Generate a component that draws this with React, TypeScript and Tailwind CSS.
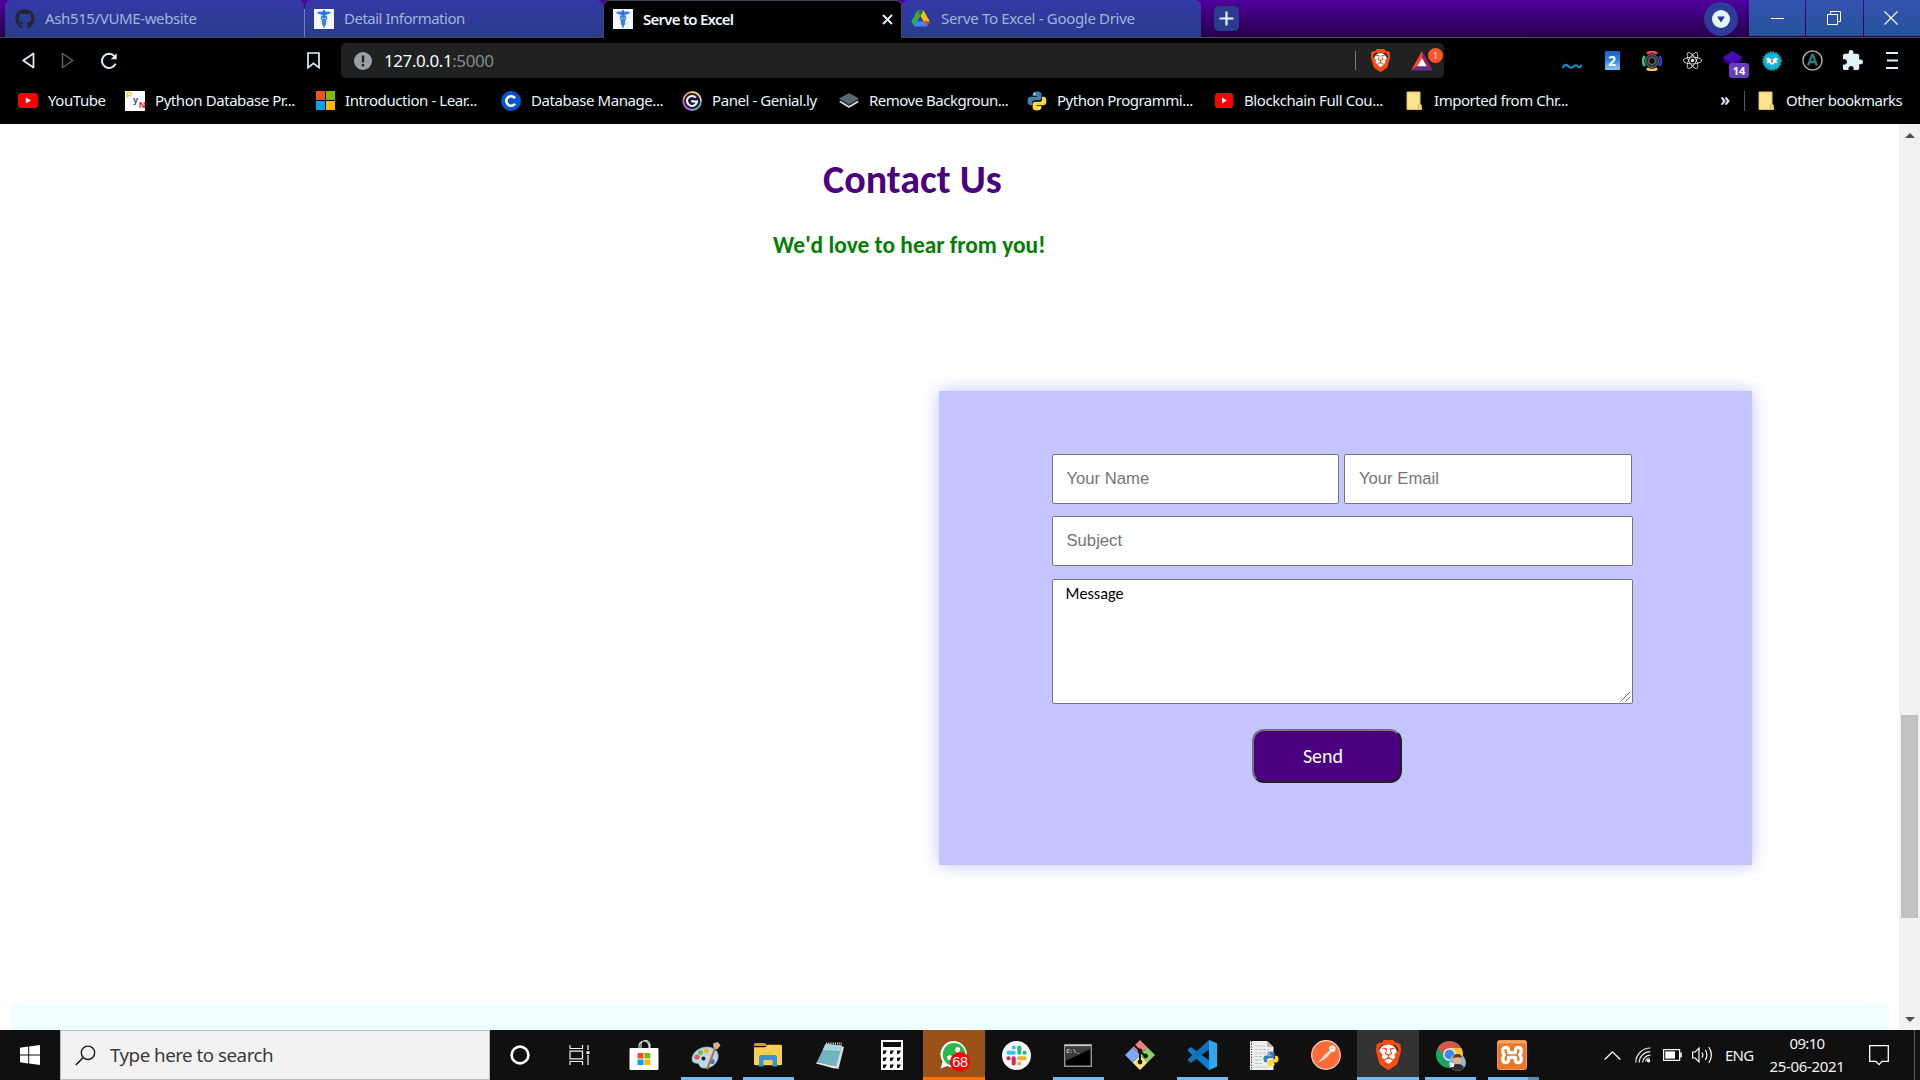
import React, { type ReactNode } from 'react';
import { FaGithub, FaReact, FaPhoneAlt } from 'react-icons/fa';
import { FaBrave } from 'react-icons/fa6';
import { MdExtension } from 'react-icons/md';

/* ---------- shared icons ---------- */

function Caduceus() {
  return (
    <svg className="h-5 w-5 shrink-0" viewBox="0 0 20 20">
      <rect width="20" height="20" fill="#f4f5f8" />
      <path d="M3 3.2Q6.5 1.6 10 3.2Q13.5 1.6 17 3.2Q15.6 5.4 13 5.4L11.5 6.4H8.5L7 5.4Q4.4 5.4 3 3.2Z" fill="#2f7fe8" />
      <circle cx="10" cy="2.2" r="1.3" fill="#2f6fe0" />
      <path d="M10 3V18.8" stroke="#1d62d8" strokeWidth="1.2" />
      <path d="M7 7.2Q13.6 8.2 12.6 9.8Q11.6 11.2 8.2 12Q7.6 13.4 11.6 14.4Q11.6 15.8 9.4 16.6M13 7.2Q6.4 8.2 7.4 9.8Q8.4 11.2 11.8 12Q12.4 13.4 8.4 14.4Q8.4 15.8 10.6 16.6" stroke="#2f7fe8" strokeWidth="1.3" fill="none" />
    </svg>
  );
}

function DriveLogo() {
  return (
    <svg className="h-[17px] w-[19px] shrink-0" viewBox="0 0 19 17">
      <path d="M6.3 0.5L9.5 6L3.2 16.5L0.3 11.2Z" fill="#34a853" />
      <path d="M6.3 0.5H12.7L18.7 11.2H12.5Z" fill="#fbbc04" />
      <path d="M6.3 0.5H12.7L9.5 6Z" fill="#188038" />
      <path d="M3.2 16.5L6.3 11.2H18.7L15.8 16.5Z" fill="#4285f4" />
      <path d="M12.5 11.2H18.7L15.8 16.5Z" fill="#ea4335" />
    </svg>
  );
}

function YouTube({ small }: { small?: boolean }) {
  return (
    <svg className={small ? 'h-[15px] w-[18px]' : 'h-[15px] w-5'} viewBox="0 0 20 15" preserveAspectRatio="none">
      <rect width="20" height="15" rx="3.6" fill="#f00" />
      <path d="M7.8 4.4L13 7.5L7.8 10.6Z" fill="#fff" />
    </svg>
  );
}

function Folder() {
  return (
    <svg className="h-5 w-[17px]" viewBox="0 0 17 20">
      <path d="M1 1H14V13L15.5 14.5V18.5H1Z" fill="#ffe591" stroke="#e8c65a" strokeWidth="1" />
      <path d="M12 18.5V14.5L14 12.8L15.5 14.5V18.5Z" fill="#f4cf62" stroke="#d9b13f" strokeWidth=".6" />
    </svg>
  );
}

function PythonLogo({ className }: { className: string }) {
  return (
    <svg className={className} viewBox="0 0 20 20">
      <path d="M10 .6C6.6.6 5.6 1.7 5.6 3.2V5H10.2V5.7H3.4C1.6 5.7.6 7.4.6 10S1.8 14.2 3.2 14.2H5V11.8C5 10.2 6.2 9.2 7.8 9.2H12.2C13.6 9.2 14.4 8.2 14.4 7V3.2C14.4 1.5 12.8.6 10 .6Z" fill="#3f7fb5" />
      <path d="M10 19.4C13.4 19.4 14.4 18.3 14.4 16.8V15H9.8V14.3H16.6C18.4 14.3 19.4 12.6 19.4 10S18.2 5.8 16.8 5.8H15V8.2C15 9.8 13.8 10.8 12.2 10.8H7.8C6.4 10.8 5.6 11.8 5.6 13V16.8C5.6 18.5 7.2 19.4 10 19.4Z" fill="#ffd43b" />
      <circle cx="7.6" cy="3.1" r=".9" fill="#fff" />
      <circle cx="12.4" cy="16.9" r=".9" fill="#fff" />
    </svg>
  );
}

function Brave({ className, iconClass }: { className: string; iconClass: string }) {
  return (
    <span className={`grid shrink-0 place-items-center ${className}`}>
      <span className="col-start-1 row-start-1 h-[68%] w-[64%] rounded-full bg-white" />
      <FaBrave className={`z-10 col-start-1 row-start-1 text-[#fb4a12] ${iconClass}`} />
    </span>
  );
}

/* ---------- browser chrome ---------- */

function Tab({ icon, title, className, children }: { icon: ReactNode; title: string; className: string; children?: ReactNode }) {
  return (
    <div className={`flex h-[37px] shrink-0 items-center rounded-t-[6px] ${className}`}>
      <span className="flex w-[30px] shrink-0 items-center">{icon}</span>
      <span className="whitespace-nowrap">{title}</span>
      {children}
    </div>
  );
}

function TabStrip() {
  return (
    <div className="flex h-[38px] items-start border-b border-[#4b4658] bg-linear-to-b from-[#50009e] to-[#26004c] pl-[5px] text-[15px] tracking-[-0.37px] text-[#a3b3dc]">
      <Tab
        className="w-[299px] bg-linear-to-b from-[#3538a8] to-[#283c8a] pl-[10px]"
        icon={<FaGithub className="h-5 w-5 text-[#24262c]" />}
        title="Ash515/VUME-website"
      />
      <span className="mt-[9px] h-[28px] w-px bg-[#6f7fc0]" />
      <Tab
        className="w-[298px] bg-linear-to-b from-[#3538a8] to-[#283c8a] pl-[9px] tracking-[-0.5px]"
        icon={<Caduceus />}
        title="Detail Information"
      />
      <Tab
        className="h-[38px] w-[299px] border border-b-0 border-[#4b4658] bg-black pb-px pl-[9px] font-semibold tracking-[-0.75px] text-[#eef8ff]"
        icon={<Caduceus />}
        title="Serve to Excel"
      >
        <svg className="mr-[8px] ml-auto h-[11px] w-[11px]" viewBox="0 0 11 11">
          <path d="M1 1L10 10M10 1L1 10" stroke="#e8f6fb" strokeWidth="1.8" />
        </svg>
      </Tab>
      <Tab
        className="w-[299px] bg-linear-to-b from-[#3538a8] to-[#283c8a] pl-[9px] tracking-[-0.32px]"
        icon={<DriveLogo />}
        title="Serve To Excel - Google Drive"
      />
      <div className="mt-[6px] ml-[13px] grid h-[25px] w-[25px] place-items-center rounded-[5px] bg-[#2c3a90]">
        <svg className="h-[15px] w-[15px]" viewBox="0 0 15 15">
          <path d="M7.5 .5V14.5M.5 7.5H14.5" stroke="#dff4fb" strokeWidth="2.2" />
        </svg>
      </div>
      <div className="mt-[2px] ml-auto grid h-[34px] w-[34px] place-items-center rounded-full bg-[#2f3b9b]">
        <svg className="h-[18px] w-[18px]" viewBox="0 0 18 18">
          <circle cx="9" cy="9" r="9" fill="#e2f5fc" />
          <path d="M5.2 6.6H12.8L9 12.4Z" fill="#2c3285" />
        </svg>
      </div>
      <div className="ml-[11px] flex h-9 w-[171px] gap-px">
        <span className="grid w-14 place-items-center bg-linear-to-b from-[#3353b2] to-[#265399]">
          <span className="h-px w-[13px] bg-white" />
        </span>
        <span className="grid w-[57px] place-items-center bg-linear-to-b from-[#3353b2] to-[#265399] pr-[2px]">
          <svg className="h-[14px] w-[14px]" viewBox="0 0 14 14" fill="none" stroke="#fff">
            <path d="M.5 3.5H10.5V13.5H.5ZM3.5 3.5V.5H13.5V10.5H10.5" />
          </svg>
        </span>
        <span className="grid flex-1 place-items-center bg-linear-to-b from-[#3353b2] to-[#265399] pr-[2px]">
          <svg className="h-[14px] w-[14px]" viewBox="0 0 14 14">
            <path d="M.5 .5L13.5 13.5M13.5 .5L.5 13.5" stroke="#fff" strokeWidth="1.1" />
          </svg>
        </span>
      </div>
    </div>
  );
}

function Extensions() {
  return (
    <div className="ml-[108px] flex h-full items-center">
      <span className="flex w-10 justify-center">
        <svg className="mt-[12px] h-[7px] w-[20px]" viewBox="0 0 20 7">
          <path d="M.5 5Q3 0 6 3T11.5 3.5T16 3.5T19.5 1.5" fill="none" stroke="#0a93d6" strokeWidth="2" />
        </svg>
      </span>
      <span className="flex w-10 justify-center">
        <span className="grid h-[19px] w-[15px] place-items-center rounded-[1px] bg-linear-to-b from-[#1763c4] via-[#2f86e4] to-[#8ac6fa] font-['Noto_Sans'] text-[14px] leading-none font-bold text-white">2</span>
      </span>
      <span className="flex w-10 justify-center">
        <svg className="h-5 w-5" viewBox="0 0 20 20" fill="none">
          <circle cx="10" cy="10" r="6.6" fill="#3a3a3c" stroke="#666" strokeWidth="1" />
          <circle cx="10" cy="10" r="3.4" fill="#0d0d10" stroke="#777" strokeWidth="1" />
          <path d="M4.9 2.7A8.9 8.9 0 0 1 15.1 2.7" stroke="#f0484e" strokeWidth="2.8" />
          <path d="M17.3 5A8.9 8.9 0 0 1 17.3 15" stroke="#2244dd" strokeWidth="2.6" />
          <path d="M15.1 17.3A8.9 8.9 0 0 1 4.9 17.3" stroke="#f8c860" strokeWidth="2.8" />
          <path d="M2.7 15A8.9 8.9 0 0 1 2.7 5" stroke="#44c070" strokeWidth="2.6" />
        </svg>
      </span>
      <span className="flex w-10 justify-center">
        <FaReact className="h-[19px] w-[19px] text-[#e4e4e4]" />
      </span>
      <span className="relative flex w-10 justify-center">
        <svg className="h-5 w-[21px]" viewBox="0 0 21 20">
          <path d="M10.5 1L20.5 9.5L10.5 17L.5 9.5Z" fill="#2c0570" />
          <path d="M10.5 0L20.5 6.5L10.5 13.5L.5 6.5Z" fill="#470ab4" />
        </svg>
        <span className="absolute top-[12px] left-[17px] grid h-[15px] w-5 place-items-center rounded-[3px] bg-[#6a3bbd] font-['Noto_Sans'] text-[11px] leading-none font-bold text-white">14</span>
      </span>
      <span className="flex w-10 justify-center">
        <svg className="h-5 w-5" viewBox="0 0 20 20">
          <circle cx="10" cy="10" r="8.8" fill="#0bb6c6" stroke="#0aa7b8" strokeWidth="2" strokeDasharray="1.6 1.2" />
          <circle cx="10" cy="10" r="7" fill="#18b4dd" />
          <path d="M4 7.6L6.5 6.4L8.6 8.6L10 7.6L11.4 8.6L13.5 6.4L16 7.6L14.5 10.2L15 12.4L12.6 11.6L11.5 13.4H8.5L7.4 11.6L5 12.4L5.5 10.2Z" fill="#f3f6f7" />
          <path d="M10 7.5L11.5 10L10 12.5L8.5 10Z" fill="#e8794a" />
        </svg>
      </span>
      <span className="flex w-10 justify-center">
        <svg className="h-[21px] w-[21px]" viewBox="0 0 21 21" fill="none">
          <circle cx="10.5" cy="10.5" r="9.6" stroke="#b4b4b4" strokeWidth="1.4" />
          <path d="M6.2 15.5L10 4.8H11L14.8 15.5M7.4 12H13.6" stroke="#2f7d7f" strokeWidth="2.3" />
        </svg>
      </span>
      <span className="flex w-10 justify-center">
        <MdExtension className="h-[23px] w-[23px] shrink-0 text-[#def3f9]" />
      </span>
      <span className="flex w-10 justify-center">
        <svg className="h-[17px] w-[12px]" viewBox="0 0 12 17">
          <path d="M0 1H12M1 8.5H12M0 16H12" stroke="#def3f9" strokeWidth="1.8" />
        </svg>
      </span>
    </div>
  );
}

function Toolbar() {
  return (
    <div className="flex h-11 items-center bg-black pt-px">
      <svg className="ml-[22px] h-[17px] w-[13px]" viewBox="0 0 13 17">
        <path d="M11.5 1.5V15.5L1.2 8.5Z" fill="none" stroke="#def3f9" strokeWidth="1.7" strokeLinejoin="round" />
      </svg>
      <svg className="ml-[26px] h-[17px] w-[13px]" viewBox="0 0 13 17">
        <path d="M1.5 1.5V15.5L11.8 8.5Z" fill="none" stroke="#5c6468" strokeWidth="1.5" strokeLinejoin="round" />
      </svg>
      <svg className="ml-[26px] h-[18px] w-[18px]" viewBox="0 0 18 18">
        <path d="M14.4 4.2A7.1 7.1 0 1 0 15.6 11.6" fill="none" stroke="#def3f9" strokeWidth="1.9" />
        <path d="M16.7 1.2V7.2H10.8Z" fill="#def3f9" />
      </svg>
      <svg className="ml-[189px] h-[17px] w-[13px]" viewBox="0 0 13 17">
        <path d="M1 1H12V15.6L6.5 11.3L1 15.6Z" fill="none" stroke="#def3f9" strokeWidth="1.7" />
      </svg>
      <div className="ml-[21px] flex h-[35px] w-[1103px] shrink-0 items-center rounded-[5px] bg-[#202222] pl-[13px]">
        <svg className="h-[18px] w-[18px]" viewBox="0 0 18 18">
          <circle cx="9" cy="9" r="9" fill="#9aa0a6" />
          <path d="M7.8 3.5H10.2V10.5H7.8ZM7.8 12H10.2V14.4H7.8Z" fill="#202222" />
        </svg>
        <span className="ml-[12px] text-[17px] tracking-[-0.42px] text-[#f2fbff]">
          127.0.0.1<span className="text-[#85898c]">:5000</span>
        </span>
        <span className="ml-auto h-[19px] w-px bg-[#777b7d]" />
        <Brave className="ml-[14px] h-[23px] w-[21px]" iconClass="h-[23px] w-[21px]" />
        <span className="relative mr-[11px] ml-5 h-[20px] w-[22px]">
          <svg className="h-[20px] w-[22px]" viewBox="0 0 22 20">
            <path d="M11 0L11 7.5L6.5 15L0 19.5Z" fill="#ff4724" />
            <path d="M11 0L22 19.5L15.5 15L11 7.5Z" fill="#9e1f63" />
            <path d="M0 19.5L6.5 15H15.5L22 19.5Z" fill="#662d91" />
            <path d="M11 7L15.8 15.2H6.2Z" fill="#fff" />
          </svg>
          <span className="absolute -top-[3px] left-[17px] grid h-[15px] w-[15px] place-items-center rounded-full bg-[#fb542b] text-[9px] leading-none tracking-normal text-white">1</span>
        </span>
      </div>
      <Extensions />
    </div>
  );
}

function Bookmark({ icon, label, className }: { icon: ReactNode; label: string; className: string }) {
  return (
    <span className={`flex shrink-0 items-center ${className}`}>
      <span className="mr-[10px] flex w-5 shrink-0 justify-center">{icon}</span>
      <span className="whitespace-nowrap">{label}</span>
    </span>
  );
}

function BookmarksBar() {
  return (
    <div className="flex h-[42px] items-center bg-black pb-[5px] pl-[18px] text-[15px] tracking-[-0.43px] text-[#e6f6fc]">
      <Bookmark className="w-[107px]" icon={<YouTube />} label="YouTube" />
      <Bookmark
        className="w-[190px]"
        label="Python Database Pr..."
        icon={
          <span className="flex h-5 w-5 gap-px bg-white pl-px font-['Liberation_Sans'] text-[9px] leading-[9px] font-bold tracking-normal">
            <span className="w-[6px] text-[#f2c52c]">P</span>
            <span className="mt-[5px] w-[5px] text-[#3b35c9]">y</span>
            <span className="mt-[10px] w-[6px] text-[#e0202c]">N</span>
          </span>
        }
      />
      <Bookmark
        className="w-[186px]"
        label="Introduction - Lear..."
        icon={
          <span className="grid h-[19px] w-[19px] grid-cols-2 gap-px">
            <i className="bg-[#f25022]" />
            <i className="bg-[#7fba00]" />
            <i className="bg-[#00a4ef]" />
            <i className="bg-[#ffb900]" />
          </span>
        }
      />
      <Bookmark
        className="w-[181px]"
        label="Database Manage..."
        icon={
          <svg className="h-5 w-5" viewBox="0 0 20 20">
            <circle cx="10" cy="10" r="10" fill="#0056d2" />
            <path d="M14 7.2A4.8 4.8 0 1 0 14 12.8" fill="none" stroke="#fff" strokeWidth="2.6" />
          </svg>
        }
      />
      <Bookmark
        className="w-[157px]"
        label="Panel - Genial.ly"
        icon={
          <svg className="h-5 w-5" viewBox="0 0 20 20" fill="none">
            <circle cx="10" cy="10" r="9" fill="#20183f" />
            <path d="M1.6 8A9 9 0 0 1 10 1" stroke="#f6a04a" strokeWidth="1.8" />
            <path d="M10 1A9 9 0 0 1 19 10" stroke="#ffd75e" strokeWidth="1.8" />
            <path d="M19 10A9 9 0 0 1 10 19" stroke="#49c3c4" strokeWidth="1.8" />
            <path d="M10 19A9 9 0 0 1 1.6 8" stroke="#c86ad8" strokeWidth="1.8" />
            <path d="M13.8 6.6A5 5 0 1 0 15 10.4H11" stroke="#fff" strokeWidth="2" />
            <circle cx="10.4" cy="10.3" r="1.2" fill="#fff" />
          </svg>
        }
      />
      <Bookmark
        className="w-[188px] tracking-[-0.5px]"
        label="Remove Backgroun..."
        icon={
          <svg className="h-[15px] w-5" viewBox="0 0 20 15">
            <path d="M0 9L10 3L20 9L10 15Z" fill="#d7dbdd" />
            <path d="M0 7L10 1L20 7L10 13Z" fill="#2a3238" />
            <path d="M0 5.5L10 0L20 5.5L10 11Z" fill="#59666e" />
          </svg>
        }
      />
      <Bookmark className="w-[187px] tracking-[-0.5px]" icon={<PythonLogo className="h-5 w-5" />} label="Python Programmi..." />
      <Bookmark className="w-[190px]" icon={<YouTube small />} label="Blockchain Full Cou..." />
      <Bookmark className="w-[161px] tracking-[-0.46px]" icon={<Folder />} label="Imported from Chr..." />
      <span className="ml-auto -mt-[2px] text-[17px] leading-none font-semibold tracking-normal">»</span>
      <span className="mr-[11px] ml-[14px] h-5 w-px bg-[#54595c]" />
      <Bookmark className="w-[164px] tracking-[-0.53px]" icon={<Folder />} label="Other bookmarks" />
    </div>
  );
}

/* ---------- web page ---------- */

function ContactForm() {
  return (
    <form className="mt-[131px] ml-[939px] flex h-[474px] w-[813px] flex-col bg-[#c4c4ff] pt-[63px] pl-[113px] font-['Liberation_Sans',sans-serif] text-[16.67px] shadow-[0_0_16px_rgba(50,50,255,0.3)]">
      <div className="flex gap-[5px]">
        <input className="h-[50px] w-[287px] rounded-[2px] border border-[#767676] bg-white px-[13.5px] placeholder:text-[#757575]" placeholder="Your Name" />
        <input className="h-[50px] w-[288px] rounded-[2px] border border-[#767676] bg-white px-[14px] placeholder:text-[#757575]" placeholder="Your Email" />
      </div>
      <input className="mt-[12px] h-[50px] w-[581px] rounded-[2px] border border-[#767676] bg-white px-[13.5px] placeholder:text-[#757575]" placeholder="Subject" />
      <div className="relative mt-[13px] h-[125px] w-[581px]">
        <textarea
          className="block h-[125px] w-[581px] resize-none rounded-[2px] border border-[#767676] bg-white px-[12.5px] py-[4px] font-['Carlito','Lato',sans-serif] text-[16.25px] leading-[20px] text-black"
          defaultValue="Message"
        />
        <svg className="absolute right-[2px] bottom-[2px] h-[11px] w-[11px]" viewBox="0 0 11 11">
          <path d="M.5 10.5L10.5 .5M5.5 10.5L10.5 5.5" stroke="#6e6e6e" strokeWidth="1" />
        </svg>
      </div>
      <button
        type="button"
        className="mt-[25px] ml-[200px] h-[54px] w-[150px] rounded-[12px] border-2 border-t-[#767676] border-r-[#212121] border-b-[#212121] border-l-[#767676] bg-[#4b0082] pr-[8px] font-['Carlito','Lato',sans-serif] text-[20px] leading-none text-white"
      >
        Send
      </button>
    </form>
  );
}

function ScrollBar() {
  return (
    <div className="flex w-[21px] shrink-0 flex-col items-center bg-[#f1f1f1]">
      <svg className="mt-[9px] h-[5px] w-[10px]" viewBox="0 0 10 5">
        <path d="M0 5L5 0L10 5Z" fill="#505050" />
      </svg>
      <span className="mt-[577px] h-[203px] w-[17px] bg-[#c1c1c1]" />
      <svg className="mt-auto mb-[8px] h-[5px] w-[10px]" viewBox="0 0 10 5">
        <path d="M0 0L5 5L10 0Z" fill="#505050" />
      </svg>
    </div>
  );
}

function Page() {
  return (
    <div className="flex h-[906px] bg-white">
      <main className="flex w-[1899px] flex-col font-['Carlito','Lato',sans-serif]">
        <h1 className="mt-[32px] pl-[823px] text-[40px] leading-[48px] font-bold text-[#4b0082]">Contact Us</h1>
        <p className="mt-[27px] pl-[773px] text-[23.4px] leading-[29px] font-bold text-[#008000]">We&apos;d love to hear from you!</p>
        <ContactForm />
        <div className="mr-[10px] mt-auto ml-[10px] h-[26px] bg-[#f0ffff]" />
      </main>
      <ScrollBar />
    </div>
  );
}

/* ---------- taskbar ---------- */

function TaskItem({ children, running, className = '', bar = 'w-[51px] bg-[#76b9ed]' }: { children: ReactNode; running?: boolean; className?: string; bar?: string }) {
  return (
    <div className={`flex h-[50px] w-[62px] shrink-0 flex-col items-center justify-between ${className}`}>
      <span className="grid h-[47px] place-items-center pt-[3px]">{children}</span>
      {running && <span className={`h-[3px] ${bar}`} />}
    </div>
  );
}

function TaskIcons() {
  return (
    <div className="ml-[23px] flex">
      <TaskItem>
        <svg className="h-[30px] w-[30px]" viewBox="0 0 30 30">
          <path d="M10 9V6A5 5 0 0 1 20 6V9M12 9V5A4.4 4.4 0 0 1 21 5V9" fill="none" stroke="#d8d8d8" strokeWidth="1.2" />
          <rect x=".5" y="8" width="29" height="22" rx="1" fill="#fff" />
          <path d="M8.5 13H14.5V18.5H8.5Z" fill="#f25022" />
          <path d="M15.3 13H21.3V18.5H15.3Z" fill="#7fba00" />
          <path d="M8.5 19.5H14.5V25H8.5Z" fill="#00a4ef" />
          <path d="M15.3 19.5H21.3V25H15.3Z" fill="#ffb900" />
        </svg>
      </TaskItem>
      <TaskItem running>
        <svg className="h-[29px] w-[30px]" viewBox="0 0 30 29">
          <path d="M1 18C1 12 8 6 16 6S28 11 27 17S20 28 12 27C8 26.5 9 23 6.5 22.5S1 22 1 18Z" fill="#b9d9ee" stroke="#7fa7c4" strokeWidth=".7" />
          <circle cx="6" cy="16" r="2.6" fill="#e2574c" />
          <circle cx="9.5" cy="11.5" r="2.5" fill="#6cbb52" />
          <circle cx="15.5" cy="9.8" r="2.6" fill="#f2b632" />
          <circle cx="12.5" cy="17.5" r="2" fill="#15171c" />
          <circle cx="21" cy="20.5" r="2.6" fill="#3d78c9" />
          <path d="M23.5 6L25.5 7L17 28.5L15 28Z" fill="#c8702a" />
          <path d="M22 2.5L27 1L29.5 4.5L26 8.5L22.5 6.5Z" fill="#d9b48a" />
        </svg>
      </TaskItem>
      <TaskItem running>
        <svg className="h-[24px] w-[28px]" viewBox="0 0 28 24">
          <path d="M0 1.5Q0 0 1.5 0H11L13.5 3H0Z" fill="#d99a10" />
          <path d="M0 4.2H11L14 1.8H26.5Q28 1.8 28 3.2V21Q28 22.3 26.5 22.3H1.5Q0 22.3 0 21Z" fill="#fccf4c" />
          <path d="M5 23.5V14Q5 12 7 12H21Q23 12 23 14V23.5H18.5V17H9.5V23.5Z" fill="#3b93dd" />
        </svg>
      </TaskItem>
      <TaskItem>
        <svg className="h-[27px] w-[28px]" viewBox="0 0 28 27">
          <path d="M25 4L28 5L22.5 27L15 25.5Z" fill="#d9dcd9" />
          <path d="M9.5 2L26 3.5L20 24.5L1 20Z" fill="#6fb3c4" />
          <path d="M9.5 2L26 3.5L24.5 9L6.7 8Z" fill="#a9d6de" />
          <path d="M1 20L20 24.5L18.6 26.5L0 21.5Z" fill="#e8ecec" />
          <path d="M10 1.6H26" stroke="#d0d4d6" strokeWidth="2" strokeDasharray="1.2 1" />
        </svg>
      </TaskItem>
      <TaskItem>
        <svg className="h-[30px] w-[22px]" viewBox="0 0 22 30">
          <rect width="22" height="30" fill="#fff" />
          <rect x="2" y="2" width="18" height="5" fill="#111" />
          <path d="M2 10.5H6L4 14H2ZM9 10.5H13L11 14H9ZM16 10.5H20L18 14H16ZM2 17.5H6L4 21H2ZM9 17.5H13L11 21H9ZM16 17.5H20L18 21H16ZM2 24.5H6L4 28H2ZM9 24.5H13L11 28H9ZM16 24.5H20L18 28H16Z" fill="#111" />
        </svg>
      </TaskItem>
      <TaskItem running className="bg-[#9a5219]" bar="w-full bg-[#ff6f00]">
        <span className="relative block h-[28px] w-[28px]">
          <svg className="h-[28px] w-[28px]" viewBox="0 0 28 28">
            <path d="M14 0A13.3 13.3 0 1 1 7.2 25L.6 27.4L2.6 20.4A13.3 13.3 0 0 1 14 0Z" fill="#fff" />
            <circle cx="14" cy="13.4" r="11.3" fill="#29b94c" />
          </svg>
          <FaPhoneAlt className="absolute top-[6px] left-[7px] h-[13px] w-[13px] -scale-x-100 rotate-0 text-white" />
          <span className="absolute top-[11px] left-[10px] grid h-5 w-5 place-items-center rounded-full bg-[#ff0000] font-['Liberation_Sans'] text-[14.5px] leading-none tracking-[-0.3px] text-white">68</span>
        </span>
      </TaskItem>
      <TaskItem>
        <svg className="h-[29px] w-[29px]" viewBox="0 0 29 29" strokeWidth="4" strokeLinecap="round">
          <circle cx="14.5" cy="14.5" r="14.5" fill="#f6f6f6" />
          <path d="M6.5 11.7H11.8M11.8 6.4V6.6" stroke="#36c5f0" />
          <path d="M17.3 6.5V11.8M22.6 11.8H22.4" stroke="#2eb67d" />
          <path d="M22.5 17.3H17.2M17.2 22.6V22.4" stroke="#ecb22e" />
          <path d="M11.7 22.5V17.2M6.4 17.2H6.6" stroke="#e01e5a" />
        </svg>
      </TaskItem>
      <TaskItem running>
        <svg className="h-[23px] w-[28px]" viewBox="0 0 28 23">
          <rect x=".75" y=".75" width="26.5" height="21.5" fill="#000" stroke="#8f9499" strokeWidth="1.5" />
          <path d="M1.5 2.5H26.5V5L1.5 17Z" fill="#3c3c3c" />
          <path d="M1 1.5H27" stroke="#c3c7ca" strokeWidth="1.6" />
          <text x="2.5" y="8.5" fontSize="5.5" fill="#e6e6e6" fontFamily="Liberation Mono" fontWeight="bold">C:\_</text>
        </svg>
      </TaskItem>
      <TaskItem>
        <svg className="h-[30px] w-[30px]" viewBox="0 0 30 30">
          <path d="M15 0L22.5 7.5L15 15L7.5 7.5Z" fill="#f07f84" />
          <path d="M22.5 7.5L30 15L22.5 22.5L15 15Z" fill="#86d468" />
          <path d="M15 15L22.5 22.5L15 30L7.5 22.5Z" fill="#fde27d" />
          <path d="M7.5 7.5L15 15L7.5 22.5L0 15Z" fill="#78aaf6" />
          <path d="M9 5L15 11V23M15 11L20.5 16.5" fill="none" stroke="#17181a" strokeWidth="2" />
          <circle cx="15" cy="11" r="2.4" fill="#17181a" />
          <circle cx="20.5" cy="16" r="2.4" fill="#17181a" />
          <circle cx="15" cy="22" r="2.4" fill="#17181a" />
        </svg>
      </TaskItem>
      <TaskItem running>
        <svg className="h-[30px] w-[30px]" viewBox="0 0 30 30">
          <path d="M22 0L30 3.4V26.6L22 30L1.2 11.2Q.2 10.2 1.2 9.2L3 7.6Q4 7 5 7.8L22 20.5Z" fill="#0a7fcf" />
          <path d="M22 30V9.5L5 22.2Q4 23 3 22.4L1.2 20.8Q.2 19.8 1.2 18.8L22 0Z" fill="#1670b5" />
          <path d="M22 0L30 3.4V26.6L22 30Z" fill="#2aa8f2" />
        </svg>
      </TaskItem>
      <TaskItem>
        <span className="relative block h-[29px] w-[28px]">
          <svg className="h-[29px] w-[24px]" viewBox="0 0 24 29">
            <path d="M0 0H17L23.5 6V29H0Z" fill="#eeeeec" />
            <path d="M17 0V6H23.5Z" fill="#b9b9b7" />
            <path d="M1.5 0V29" stroke="#4a4a4a" strokeWidth="1.2" strokeDasharray="1.3 1.3" />
            <path d="M5 5H15M5 8.5H19M5 12H17M5 15.5H12M5 19H11M5 22.5H13M5 26H18" stroke="#bdbdbb" strokeWidth="1" strokeDasharray="3 1" />
          </svg>
          <PythonLogo className="absolute top-[10px] left-[13px] h-[16px] w-[16px]" />
        </span>
      </TaskItem>
      <TaskItem>
        <svg className="h-[30px] w-[30px]" viewBox="0 0 30 30">
          <circle cx="15" cy="15" r="14.3" fill="#ff6c37" stroke="#ffd2c0" strokeWidth="1.2" />
          <circle cx="21.3" cy="8.7" r="3.2" fill="#fff" />
          <path d="M7 23L14 14.5L18.5 11L20 12.5L15.5 17.5Z" fill="#fff" />
          <path d="M12 18.5L17.5 13" stroke="#ff6c37" strokeWidth=".7" />
          <path d="M19.6 8.2H22.4" stroke="#ff6c37" strokeWidth=".8" />
        </svg>
      </TaskItem>
      <TaskItem running className="bg-[#333333]" bar="w-full bg-[#76b9ed]">
        <Brave className="h-[31px] w-[27px]" iconClass="h-[30px] w-[27px]" />
      </TaskItem>
      <TaskItem running>
        <svg className="h-[31px] w-[31px]" viewBox="0 0 31 31">
          <circle cx="14.5" cy="14.5" r="13.5" fill="#1da362" />
          <path d="M14.5 8H26.3A13.5 13.5 0 0 1 15 28L21 15Z" fill="#fbc62b" />
          <path d="M2.8 7.8A13.5 13.5 0 0 1 26.2 8H14.5L9 16Z" fill="#d9544b" />
          <circle cx="14.5" cy="14.5" r="6.3" fill="#fff" />
          <circle cx="14.5" cy="14.5" r="5.1" fill="#4285f4" />
          <circle cx="22.5" cy="22.5" r="8.5" fill="#8fb5d3" />
          <circle cx="22.5" cy="19.5" r="4.2" fill="#e6b183" />
          <path d="M18 18Q18.5 14 22.5 14T27 18Q24 16.5 18 18Z" fill="#5e3d21" />
          <path d="M16 28Q17 24 22.5 24T29 28Q23 33.5 16 28Z" fill="#2d3033" />
          <path d="M14.5 22.5L19 23.5V27L15 27Z" fill="#f4f4f4" />
        </svg>
      </TaskItem>
      <div className="flex h-[50px] w-[62px] flex-col items-center justify-between">
        <span className="grid h-[47px] place-items-center pt-[3px]">
          <svg className="h-[30px] w-[30px]" viewBox="0 0 30 30">
            <rect x=".5" y=".5" width="29" height="29" rx="2" fill="#e8782a" stroke="#f19a58" />
            <path d="M1 1H29V3.5H1Z" fill="#f4a362" />
            <path
              d="M11.6 12.6V10.6Q11.6 7.4 8.6 7.4T5.8 11Q5.8 13.4 7.4 15Q5.8 16.6 5.8 19Q5.8 22.6 8.6 22.6T11.6 19.4V17.4H18.4V19.4Q18.4 22.6 21.4 22.6T24.2 19Q24.2 16.6 22.6 15Q24.2 13.4 24.2 11Q24.2 7.4 21.4 7.4T18.4 10.6V12.6Z"
              fill="none"
              stroke="#fff"
              strokeWidth="3.4"
              strokeLinejoin="round"
            />
          </svg>
        </span>
        <span className="ml-[2px] flex h-[3px] w-[51px]">
          <i className="w-[40px] bg-[#76b9ed]" />
          <i className="w-[11px] bg-[#5a8bb4]" />
        </span>
      </div>
    </div>
  );
}

function Tray() {
  return (
    <div className="ml-auto flex items-center text-[15px] leading-none text-[#f2f2f2]">
      <svg className="h-[9px] w-[17px]" viewBox="0 0 17 9">
        <path d="M.7 8.5L8.5 .9L16.3 8.5" fill="none" stroke="#fff" strokeWidth="1.3" />
      </svg>
      <svg className="ml-[14px] h-[16px] w-[16px]" viewBox="0 0 16 16" fill="none" stroke="#e6e6e6" strokeWidth="1.2">
        <path d="M.8 15.5A14.6 14.6 0 0 1 15.4 1M4.2 15.5A11.2 11.2 0 0 1 15.4 4.6M7.6 15.5A7.8 7.8 0 0 1 15.4 8.2" />
        <circle cx="13.6" cy="13.8" r="1.7" fill="#fff" stroke="none" />
        <path d="M10.6 14.5Q11 11.5 14.5 11" />
      </svg>
      <svg className="ml-[12px] h-[12px] w-[19px]" viewBox="0 0 19 12">
        <rect x=".6" y=".6" width="16" height="10.8" fill="none" stroke="#fff" strokeWidth="1.2" />
        <rect x="2.3" y="2.4" width="9.7" height="7.2" fill="#fff" />
        <path d="M17.2 3.5H18.8V8.5H17.2Z" fill="#fff" />
      </svg>
      <svg className="ml-[10px] h-[18px] w-[21px]" viewBox="0 0 21 18" fill="none" stroke="#fff" strokeWidth="1.2">
        <path d="M.6 6V12H3.2L7 15.8V2.2L3.2 6Z" />
        <path d="M10 6.5Q11.6 9 10 11.5M13.4 4Q16.4 9 13.4 14M16.8 1.2Q22 9 16.8 16.8" />
      </svg>
      <span className="ml-[12px] w-[29px] tracking-[-0.75px]">ENG</span>
      <span className="ml-[13px] flex w-[80px] flex-col items-center gap-[8px] tracking-[-0.35px]">
        <span className="tracking-[-0.7px]">09:10</span>
        <span>25-06-2021</span>
      </span>
      <svg className="mt-[1px] ml-[22px] h-[21px] w-[20px]" viewBox="0 0 20 21">
        <path d="M.7 .7H19.3V16.3H13L10 19.6L7 16.3H.7Z" fill="none" stroke="#fff" strokeWidth="1.3" />
      </svg>
      <span className="mr-[5px] ml-[25px] h-[50px] w-px bg-[#5a5a5a]" />
    </div>
  );
}

function Taskbar() {
  return (
    <div className="flex h-[50px] items-center bg-[#101010]">
      <span className="flex w-[60px] justify-center">
        <svg className="h-5 w-5" viewBox="0 0 20 20" fill="#fff">
          <path d="M0 2.8L8.2 1.6V9.5H0ZM9.2 1.4L20 0V9.5H9.2ZM0 10.5H8.2V18.4L0 17.2ZM9.2 10.5H20V20L9.2 18.6Z" />
        </svg>
      </span>
      <div className="flex h-[50px] w-[430px] items-center border border-[#bdbdbd] bg-[#f2f2f2] pl-[14px]">
        <svg className="h-[21px] w-[21px]" viewBox="0 0 21 21">
          <circle cx="13" cy="7.8" r="6.7" fill="none" stroke="#1c1c1c" strokeWidth="1.4" />
          <path d="M8.2 12.6L.8 20" stroke="#1c1c1c" strokeWidth="1.5" />
        </svg>
        <span className="ml-[14px] text-[18.75px] leading-none tracking-[-0.5px] text-[#3a3a3a]">Type here to search</span>
      </div>
      <svg className="ml-5 h-5 w-5" viewBox="0 0 20 20">
        <circle cx="10" cy="10" r="8.4" fill="none" stroke="#fff" strokeWidth="2.6" />
      </svg>
      <svg className="ml-[39px] h-[20px] w-[21px]" viewBox="0 0 21 20" fill="none" stroke="#f2f2f2" strokeWidth="1.2">
        <path d="M1 0V3.5H13.5V0M1 20V16.5H13.5V20M1 6.2H13.5V13.8H1ZM19 0V5M19 10V20" />
        <rect x="17.5" y="6.3" width="3" height="2.6" fill="#fff" stroke="none" />
      </svg>
      <TaskIcons />
      <Tray />
    </div>
  );
}

export default function App() {
  return (
    <div className="h-[1080px] w-[1920px] overflow-hidden bg-white font-['Noto_Sans',sans-serif]">
      <TabStrip />
      <Toolbar />
      <BookmarksBar />
      <Page />
      <Taskbar />
    </div>
  );
}
